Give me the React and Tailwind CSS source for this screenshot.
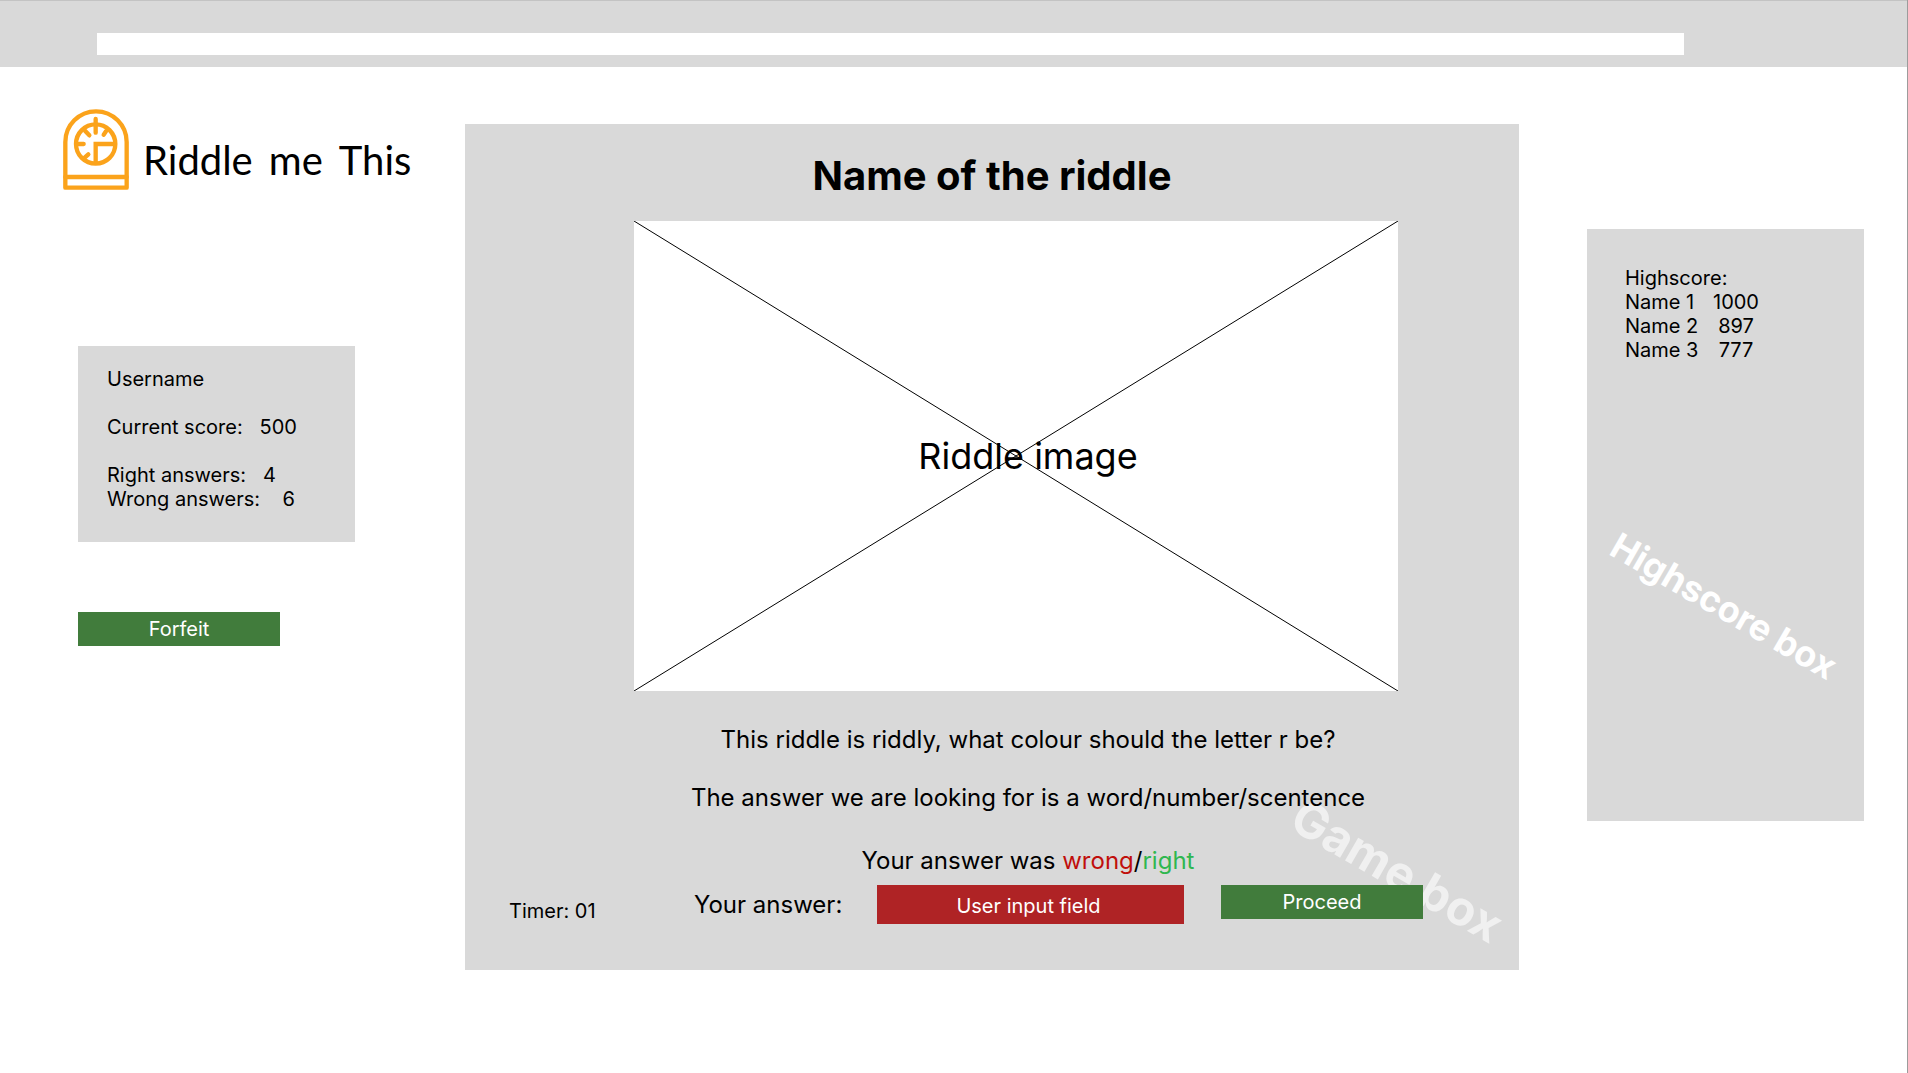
import React from "react";

const highscores = [
  { name: "Name 1", score: 1000 },
  { name: "Name 2", score: 897 },
  { name: "Name 3", score: 777 },
];

function ClockLogo() {
  return (
    <svg
      viewBox="22 27 198 243"
      className="h-[81px] w-[66px] shrink-0"
      fill="none"
      stroke="#fba31b"
      strokeWidth="13"
      strokeLinecap="round"
      strokeLinejoin="round"
      aria-hidden="true"
    >
      <path d="M29 263V126a92 92 0 0 1 184 0V263Z" />
      <path d="M29 231H213" />
      <circle cx="120" cy="132" r="59" />
      <path d="M120 57V98M151 94L144 104M88 92L101 106M62 132H84M87 173L98 163" />
      <path d="M120 190V132H178" strokeLinecap="butt" strokeLinejoin="miter" />
    </svg>
  );
}

function BrowserBar() {
  return (
    <header className="h-[67px] border-t border-[#c3c3c3] bg-[#d9d9d9] pt-8 pr-[223px] pl-[97px]">
      <input aria-label="Address" className="block h-[22px] w-full bg-white px-2 text-sm outline-none" />
    </header>
  );
}

function PlayerColumn() {
  return (
    <aside className="w-[465px] shrink-0 pt-[42px]">
      <div className="flex pl-[63px]">
        <ClockLogo />
        <h1 className="mt-[26px] ml-[14px] flex gap-4 font-[Lato,sans-serif] text-[40px] leading-[50px]">
          <span>Riddle</span> <span>me</span> <span>This</span>
        </h1>
      </div>
      <div className="mt-[156px] ml-[78px] h-[196px] w-[277px] bg-[#d9d9d9] px-[29px] pt-[21px] whitespace-pre">
        <p>Username</p>
        <p className="mt-6">{"Current score:   500"}</p>
        <p className="mt-6">{"Right answers:   4"}</p>
        <p>{"Wrong answers:    6"}</p>
      </div>
      <button type="button" className="mt-[70px] ml-[78px] block h-[34px] w-[202px] bg-[#417c3c] text-white">
        Forfeit
      </button>
    </aside>
  );
}

function GameBox() {
  return (
    <main className="relative isolate mt-[57px] min-w-0 flex-1 bg-[#d9d9d9] pt-7 pb-[46px]">
      <span className="absolute right-[5px] bottom-[70px] -z-10 rotate-[30deg] text-[48px] leading-[58px] font-bold whitespace-nowrap text-white/60">
        Game box
      </span>
      <h2 className="text-center text-[40px] leading-[48px] font-bold">Name of the riddle</h2>
      <div className="relative mt-[21px] mr-[121px] ml-[169px] flex h-[470px] items-center justify-center bg-white pl-6">
        <svg className="absolute inset-0 h-full w-full" stroke="#000" aria-hidden="true">
          <line x1="0" y1="0" x2="100%" y2="100%" />
          <line x1="0" y1="100%" x2="100%" y2="0" />
        </svg>
        <p className="text-[36px] leading-[44px]">Riddle image</p>
      </div>
      <div className="pt-[33px] pl-[72px] text-center text-2xl leading-8">
        <p>This riddle is riddly, what colour should the letter r be?</p>
        <p className="mt-[26px]">The answer we are looking for is a word/number/scentence</p>
        <p className="mt-[31px]">
          Your answer was <span className="text-[#c00f0c]">wrong</span>/<span className="text-[#30b750]">right</span>
        </p>
      </div>
      <form className="mt-2 flex items-start pr-24 pl-11" onSubmit={(e) => e.preventDefault()}>
        <p className="mt-[14px] w-[185px]">Timer: 01</p>
        <label htmlFor="answer" className="mt-1 w-[183px] text-2xl leading-8">
          Your answer:
        </label>
        <input
          id="answer"
          placeholder="User input field"
          className="h-[39px] min-w-0 flex-1 bg-[#af2325] pt-[2px] pr-1 text-center text-white outline-none placeholder:text-white"
        />
        <button type="submit" className="ml-[37px] h-[34px] w-[202px] bg-[#417c3c] text-white">
          Proceed
        </button>
      </form>
    </main>
  );
}

function HighscoreBox() {
  return (
    <aside className="relative mt-[162px] mr-[43px] ml-[68px] h-[592px] w-[277px] shrink-0 bg-[#d9d9d9] pt-[37px] pl-[38px]">
      <table>
        <caption className="text-left">Highscore:</caption>
        <tbody>
          {highscores.map((row) => (
            <tr key={row.name}>
              <td className="w-[88px] p-0">{row.name}</td>
              <td className="p-0 text-center">{row.score}</td>
            </tr>
          ))}
        </tbody>
      </table>
      <span className="absolute top-[355px] left-[10px] rotate-[30deg] text-[36px] leading-[44px] font-bold whitespace-nowrap text-white">
        Highscore box
      </span>
    </aside>
  );
}

export default function App() {
  return (
    <div className="min-h-screen border-r border-[#9c9c9c] bg-white font-[Inter,sans-serif] text-[20px] leading-6 text-black">
      <BrowserBar />
      <div className="flex items-start">
        <PlayerColumn />
        <GameBox />
        <HighscoreBox />
      </div>
    </div>
  );
}
